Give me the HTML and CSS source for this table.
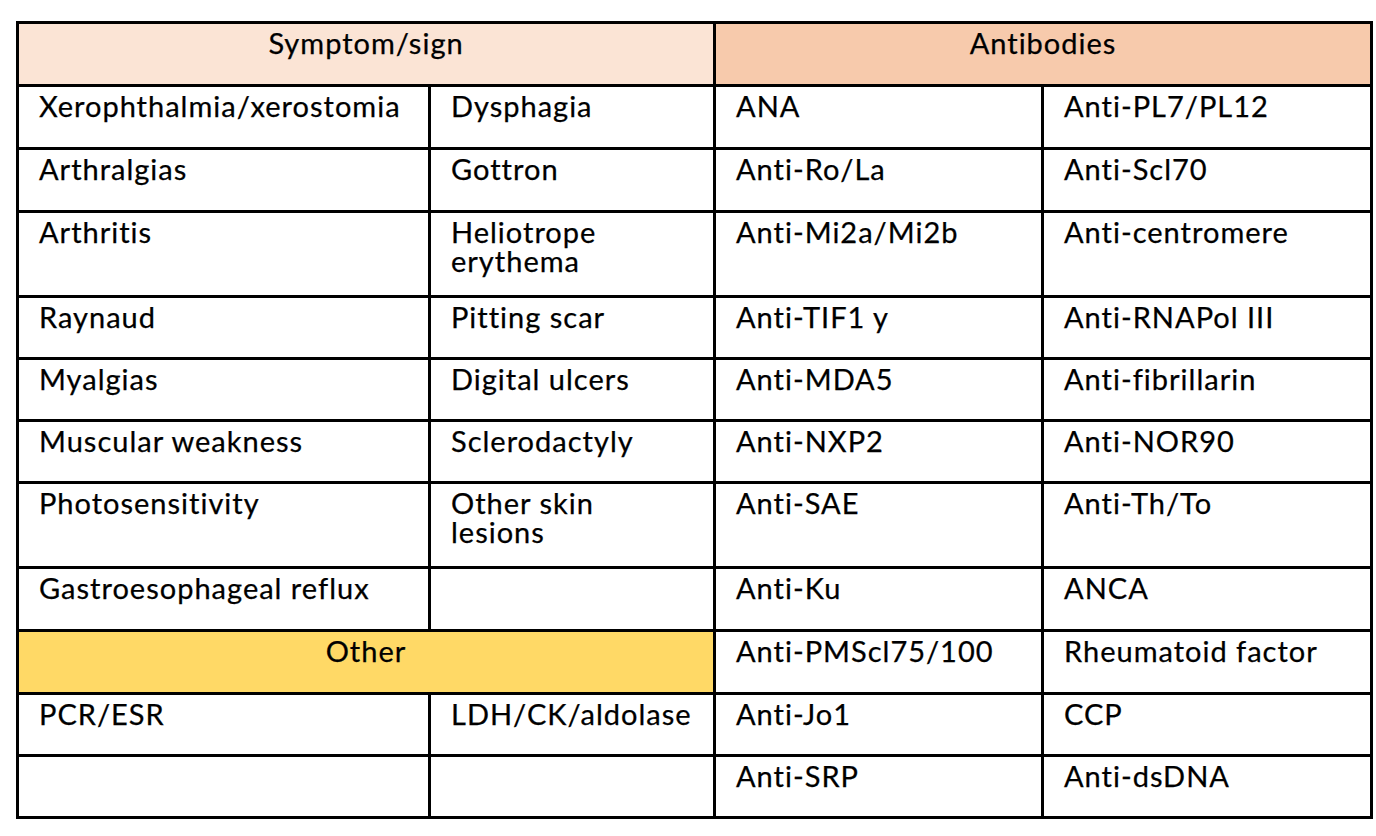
FILE: index.html
```html
<!DOCTYPE html>
<html lang="en">
<head>
<meta charset="utf-8">
<title>Symptoms and antibodies</title>
<link rel="stylesheet" href="styles.css">
</head>
<body>
<table class="grid">
  <colgroup>
    <col class="c1">
    <col class="c2">
    <col class="c3">
    <col class="c4">
  </colgroup>
  <tbody>
    <tr class="r63">
      <th colspan="2" class="hd hd-sym">Symptom/sign</th>
      <th colspan="2" class="hd hd-ab">Antibodies</th>
    </tr>
    <tr class="r63">
      <td>Xerophthalmia/xerostomia</td><td>Dysphagia</td><td>ANA</td><td>Anti-PL7/PL12</td>
    </tr>
    <tr class="r63">
      <td>Arthralgias</td><td>Gottron</td><td>Anti-Ro/La</td><td>Anti-Scl70</td>
    </tr>
    <tr class="r85">
      <td>Arthritis</td><td><span class="ln">Heliotrope</span><span class="ln">erythema</span></td><td>Anti-Mi2a/Mi2b</td><td>Anti-centromere</td>
    </tr>
    <tr class="r62">
      <td>Raynaud</td><td>Pitting scar</td><td>Anti-TIF1 y</td><td>Anti-RNAPol III</td>
    </tr>
    <tr class="r62">
      <td>Myalgias</td><td>Digital ulcers</td><td>Anti-MDA5</td><td>Anti-fibrillarin</td>
    </tr>
    <tr class="r62">
      <td>Muscular weakness</td><td>Sclerodactyly</td><td>Anti-NXP2</td><td>Anti-NOR90</td>
    </tr>
    <tr class="r85">
      <td>Photosensitivity</td><td><span class="ln">Other skin</span><span class="ln">lesions</span></td><td>Anti-SAE</td><td>Anti-Th/To</td>
    </tr>
    <tr class="r63">
      <td>Gastroesophageal reflux</td><td></td><td>Anti-Ku</td><td>ANCA</td>
    </tr>
    <tr class="r63">
      <th colspan="2" class="hd hd-other">Other</th>
      <td>Anti-PMScl75/100</td><td>Rheumatoid factor</td>
    </tr>
    <tr class="r62">
      <td>PCR/ESR</td><td>LDH/CK/aldolase</td><td>Anti-Jo1</td><td>CCP</td>
    </tr>
    <tr class="r62">
      <td></td><td></td><td>Anti-SRP</td><td>Anti-dsDNA</td>
    </tr>
  </tbody>
</table>
</body>
</html>
```

FILE: styles.css
```css
html, body {
  margin: 0;
  padding: 0;
  background: #ffffff;
}

body {
  font-family: Lato, "Liberation Sans", sans-serif;
  color: #000000;
}

.grid {
  table-layout: fixed;
  border-collapse: separate;
  border-spacing: 0;
  width: 1357px;
  margin: 21px 0 0 16px;
  border-top: 3px solid #000;
  border-left: 3px solid #000;
}

.c1 { width: 412px; }
.c2 { width: 285px; }
.c3 { width: 328px; }
.c4 { width: 329px; }

.grid td,
.grid th {
  box-sizing: border-box;
  border-right: 3px solid #000;
  border-bottom: 3px solid #000;
  padding: 4px 6px 0 20px;
  vertical-align: top;
  text-align: left;
  font-size: 29px;
  font-weight: 400;
  line-height: 30px;
  letter-spacing: 1px;
  white-space: nowrap;
  -webkit-text-stroke: 0.25px #000;
}

.ln {
  display: block;
  line-height: 29px;
}

.grid .hd {
  text-align: center;
  padding-left: 0;
  padding-right: 0;
}

.hd-sym { background: #fbe4d5; }
.hd-ab { background: #f7caac; }
.hd-other { background: #ffd966; }

.r63 { height: 63px; }
.r62 { height: 62px; }
.r85 { height: 85px; }
```
